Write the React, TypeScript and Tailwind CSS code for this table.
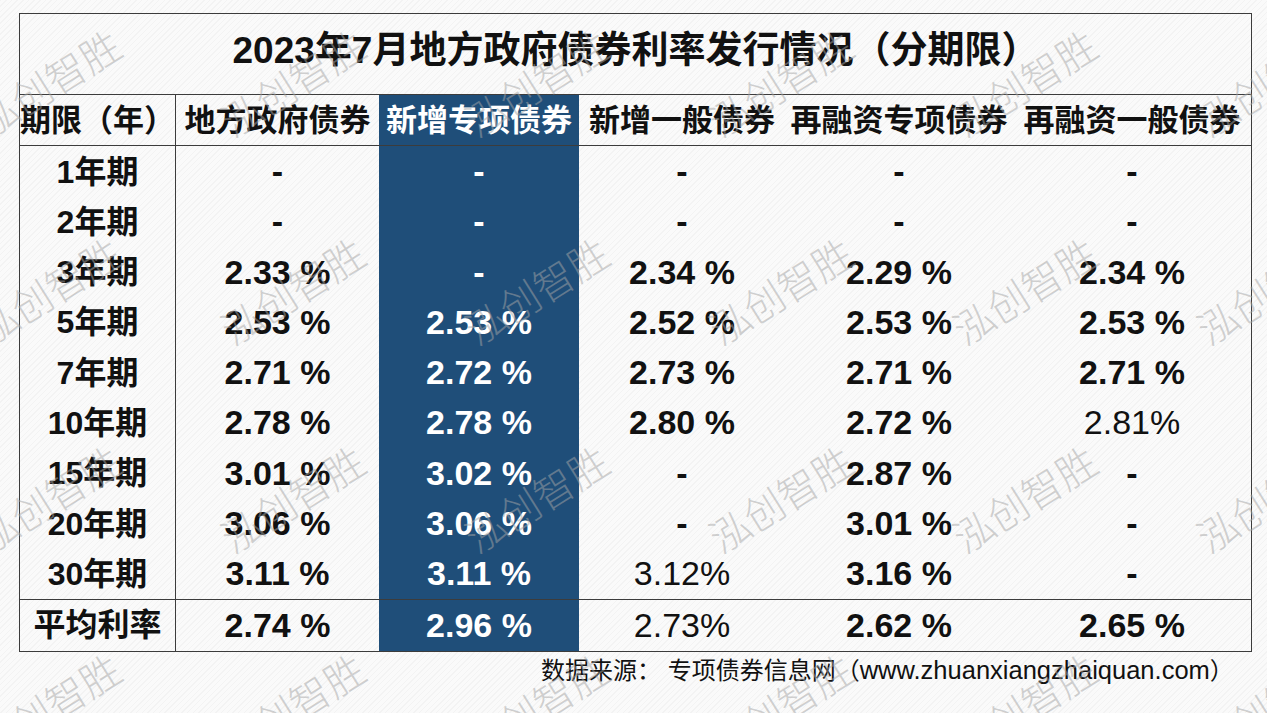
import React from 'react'

const FONT = "font-['Liberation_Sans','Noto_Sans_CJK_SC',sans-serif]"
const GRID = 'grid grid-cols-[156px_203px_200px_206px_228px_238px]'
const BLUE = 'bg-[#1f4e79] text-white'

const headers = ['期限（年）', '地方政府债券', '新增专项债券', '新增一般债券', '再融资专项债券', '再融资一般债券']

const rows = [
  ['1年期', '-', '-', '-', '-', '-'],
  ['2年期', '-', '-', '-', '-', '-'],
  ['3年期', '2.33 %', '-', '2.34 %', '2.29 %', '2.34 %'],
  ['5年期', '2.53 %', '2.53 %', '2.52 %', '2.53 %', '2.53 %'],
  ['7年期', '2.71 %', '2.72 %', '2.73 %', '2.71 %', '2.71 %'],
  ['10年期', '2.78 %', '2.78 %', '2.80 %', '2.72 %', '2.81%'],
  ['15年期', '3.01 %', '3.02 %', '-', '2.87 %', '-'],
  ['20年期', '3.06 %', '3.06 %', '-', '3.01 %', '-'],
  ['30年期', '3.11 %', '3.11 %', '3.12%', '3.16 %', '-'],
]

const average = ['平均利率', '2.74 %', '2.96 %', '2.73%', '2.62 %', '2.65 %']

// watermark grid: 6 columns x 4 rows
const marks: { x: number; y: number }[] = []
for (let j = 0; j < 4; j++) {
  for (let i = 0; i < 6; i++) {
    marks.push({ x: 48 + 244 * i, y: 82 + 208 * j })
  }
}

function Cell({ value, col, className = '' }: { value: string; col: number; className?: string }) {
  // values written without a space before % are set in regular weight
  const regular = /\d%$/.test(value)
  return (
    <div
      className={`flex items-center justify-center whitespace-nowrap ${
        col === 0 ? 'border-r border-[#3c3c3c] text-[32px] font-bold' : 'text-[34px]'
      } ${col !== 0 && !regular ? 'font-bold' : ''} ${col === 2 ? BLUE : 'text-[#111]'} ${className}`}
    >
      {value}
    </div>
  )
}

export default function App() {
  return (
    <div
      className={`relative h-[713px] w-full overflow-hidden bg-[repeating-linear-gradient(135deg,#f3f3f3_0px,#f3f3f3_1px,#fafafa_1px,#fafafa_4px)] ${FONT}`}
    >
      <div className="pl-[19px] pt-[13px]">
        <div className="w-[1233px] border border-[#3c3c3c]">
          {/* Title */}
          <div className="flex h-[81px] items-center justify-center border-b border-[#3c3c3c] pb-[7px] text-[37px] font-bold leading-none text-[#111]">
            2023年7月地方政府债券利率发行情况（分期限）
          </div>

          {/* Header */}
          <div className={`${GRID} h-[51px] border-b border-[#3c3c3c]`}>
            {headers.map((h, i) => (
              <div
                key={h}
                className={`flex items-center justify-center whitespace-nowrap text-[31px] font-bold leading-none ${
                  i === 0 ? 'border-r border-[#3c3c3c]' : ''
                } ${i === 2 ? BLUE : 'text-[#111]'}`}
              >
                {h}
              </div>
            ))}
          </div>

          {/* Body */}
          {rows.map((r) => (
            <div key={r[0]} className={`${GRID} h-[50.3px]`}>
              {r.map((v, i) => (
                <Cell key={i} value={v} col={i} />
              ))}
            </div>
          ))}

          {/* Average */}
          <div className={`${GRID} h-[52px] border-t border-[#3c3c3c]`}>
            {average.map((v, i) => (
              <Cell key={i} value={v} col={i} />
            ))}
          </div>
        </div>
      </div>

      {/* Source */}
      <div className="mt-[3px] whitespace-nowrap pl-[541px] text-[24px] leading-[30px] text-[#111]">
        数据来源： 专项债券信息网（<span className="text-[25.5px]">www.zhuanxiangzhaiquan.com</span>）
      </div>

      {/* Watermarks */}
      <div className="pointer-events-none absolute inset-0 z-10">
        {marks.map((m, k) => (
          <span
            key={k}
            className="absolute -translate-x-1/2 -translate-y-1/2 -rotate-[32deg] whitespace-nowrap font-['Noto_Sans_CJK_SC',sans-serif] text-[40px] font-light leading-none text-[rgba(165,165,165,0.5)]"
            style={{ left: m.x, top: m.y }}
          >
            泓创智胜
          </span>
        ))}
      </div>
    </div>
  )
}
